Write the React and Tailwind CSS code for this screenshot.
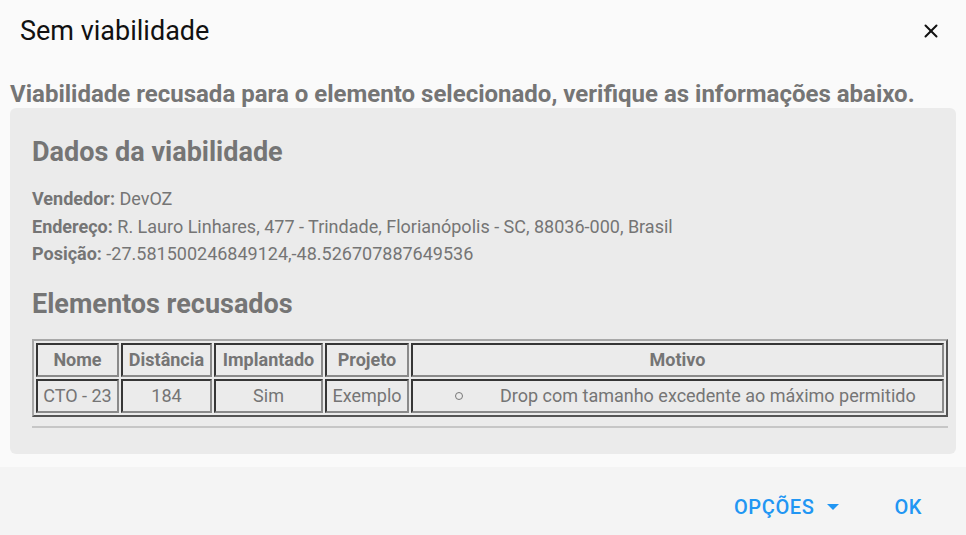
import { X } from 'lucide-react';

// diálogo de viabilidade recusada

const rows = [
  { nome: 'CTO - 23', distancia: '184', implantado: 'Sim', projeto: 'Exemplo', motivo: 'Drop com tamanho excedente ao máximo permitido' },
];

const cell = 'border-2 border-[#8a8a8a] [border-style:inset] text-center px-[2px] whitespace-nowrap';

const App = () => {
  return (
    <div className="w-[966px] h-[535px] flex flex-col bg-[#fafafa] text-[#757575] font-['Roboto',sans-serif] overflow-hidden">
      <div className="h-[62px] flex items-center justify-between pl-5 pr-[24px] shrink-0">
        <h2 className="text-[27px] text-[#111] font-normal">Sem viabilidade</h2>
        <X size={22} strokeWidth={2.2} className="text-[#111]" />
      </div>

      <div className="px-[10px] flex-1">
        <p className="text-[24px] font-bold leading-[28px] mt-[18px] whitespace-nowrap">
          Viabilidade recusada para o elemento selecionado, verifique as informações abaixo.
        </p>
        <div className="bg-[#ebebeb] rounded-md pl-[22px] pr-[8px] pt-[27px] pb-[26px]">
          <h3 className="text-[27px] font-bold leading-[34px]">Dados da viabilidade</h3>
          <div className="mt-[16px] text-[18px] leading-[27.5px]">
            <p><b>Vendedor:</b> DevOZ</p>
            <p><b>Endereço:</b> R. Lauro Linhares, 477 - Trindade, Florianópolis - SC, 88036-000, Brasil</p>
            <p><b>Posição:</b> -27.581500246849124,-48.526707887649536</p>
          </div>
          <h3 className="text-[27px] font-bold leading-[34px] mt-[19px]">Elementos recusados</h3>
          <table className="w-full mt-[18px] border-separate border-spacing-[2px] border-2 border-[#a8a8a8] [border-style:outset] text-[18px]">
            <thead>
              <tr className="h-[34px]">
                <th className={`${cell} w-[83px]`}>Nome</th>
                <th className={`${cell} w-[91px]`}>Distância</th>
                <th className={`${cell} w-[109px]`}>Implantado</th>
                <th className={`${cell} w-[84px]`}>Projeto</th>
                <th className={cell}>Motivo</th>
              </tr>
            </thead>
            <tbody>
              {rows.map((r) => (
                <tr key={r.nome} className="h-[34px]">
                  <td className={cell}>{r.nome}</td>
                  <td className={cell}>{r.distancia}</td>
                  <td className={cell}>{r.implantado}</td>
                  <td className={cell}>{r.projeto}</td>
                  <td className={`${cell} !text-left`}>
                    <div className="flex items-center pl-[40px]">
                      <span className="w-[8px] h-[8px] rounded-full border border-[#777] shrink-0" />
                      <span className="ml-[37px]">{r.motivo}</span>
                    </div>
                  </td>
                </tr>
              ))}
            </tbody>
          </table>
          <div className="mt-[9px] border-t-2 border-[#c6c6c6]" />
        </div>
      </div>

      <div className="h-[68px] bg-[#f4f4f4] flex items-center justify-end gap-[54px] pr-[44px] pt-[12px] shrink-0 text-[#2196f3] text-[20px] font-medium tracking-[0.6px]">
        <button className="flex items-center gap-[12px]">
          OPÇÕES
          <svg width="14" height="8" viewBox="0 0 14 8"><path d="M1 1h12L7 7z" fill="currentColor" /></svg>
        </button>
        <button>OK</button>
      </div>
    </div>
  );
};

export default App;
